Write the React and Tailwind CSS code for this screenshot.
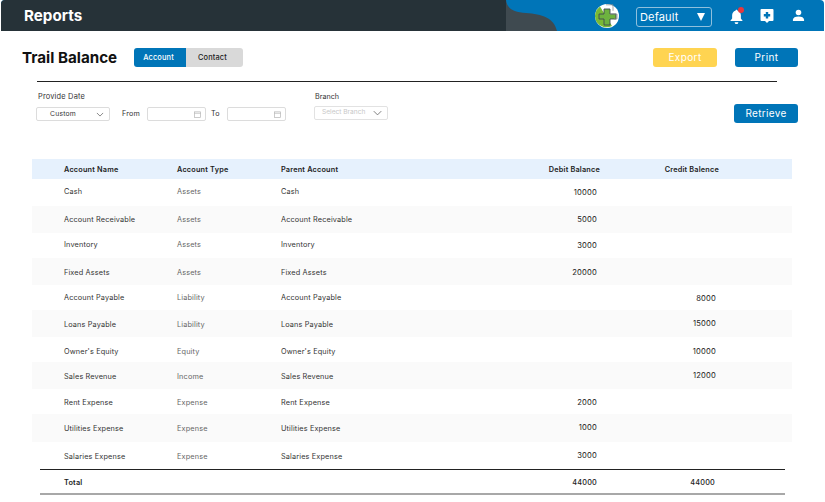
const FONT = "font-['Inter','Liberation_Sans',sans-serif]";

const rows = [
  { n: 'Cash', t: 'Assets', d: '10000', h: 'h-[27px] pb-[2px]', bg: '', low: true },
  { n: 'Account Receivable', t: 'Assets', d: '5000', h: 'h-[27px]', bg: 'bg-[#fafafa]' },
  { n: 'Inventory', t: 'Assets', d: '3000', h: 'h-[25px] pb-[2px]', bg: '', low: true },
  { n: 'Fixed Assets', t: 'Assets', d: '20000', h: 'h-[27px] pt-px', bg: 'bg-[#fafafa]', low: true },
  { n: 'Account Payable', t: 'Liability', c: '8000', h: 'h-[25px]', bg: '', low: true },
  { n: 'Loans Payable', t: 'Liability', c: '15000', h: 'h-[27px] pt-px', bg: 'bg-[#fafafa]' },
  { n: "Owner's Equity", t: 'Equity', c: '10000', h: 'h-[25px] pt-[3px]', bg: '', low: true },
  { n: 'Sales Revenue', t: 'Income', c: '12000', h: 'h-[27px] pt-px', bg: 'bg-[#fafafa]' },
  { n: 'Rent Expense', t: 'Expense', d: '2000', h: 'h-[25px] pt-px', bg: '', low: true },
  { n: 'Utilities Expense', t: 'Expense', d: '1000', h: 'h-[28px]', bg: 'bg-[#fafafa]' },
  { n: 'Salaries Expense', t: 'Expense', d: '3000', h: 'h-[27px] pt-px', bg: '' },
];

function Chevron({ className }) {
  return (
    <svg viewBox="0 0 12 8" className={className} fill="none" stroke="currentColor" strokeWidth="1.1">
      <path d="M1 1.500 6 6.500 11 1.500" />
    </svg>
  );
}

function CalendarIcon() {
  return (
    <svg viewBox="0 0 8 8" className="w-[7px] h-[7px] text-[#b5b5b5]" fill="none" stroke="currentColor" strokeWidth="0.8">
      <rect x="0.5" y="1" width="7" height="6.5" />
      <path d="M0.500 2.600H7.500" />
    </svg>
  );
}

function DateField() {
  return (
    <div className="w-[59px] h-[14px] border border-[#dcdcdc] rounded-[2px] flex items-center justify-end pr-[4px]">
      <CalendarIcon />
    </div>
  );
}

function Logo() {
  return (
    <svg viewBox="0 0 24 24" className="w-[24px] h-[24px]">
      <circle cx="12" cy="12" r="12" fill="#fff" />
      <path d="M1.500 18A12 12 0 0 1 5 2.500L17 22A12 12 0 0 1 1.500 18Z" fill="#79b935" />
      <path d="M9 5h6v5h6v5h-6v6H9v-6H4v-5h5Z" fill="#6db33f" stroke="#3f4a50" strokeWidth="0.9" />
      <path d="M11 0.800h7v6" fill="none" stroke="#8a8f92" strokeWidth="0.8" />
      <path d="M15 10h7v5h-3" fill="none" stroke="#8a8f92" strokeWidth="0.8" />
    </svg>
  );
}

function Row({ r }) {
  const num = `shrink-0 text-right text-[7.6px] tracking-[0.2px] text-[#222] ${r.low ? 'mt-[2px]' : ''}`;
  return (
    <div className={`${r.h} ${r.bg} flex text-[7.3px] tracking-[0.15px] text-[#333] items-center`}>
      <div className="w-[145px] pl-[32px] shrink-0 mt-[2px]">{r.n}</div>
      <div className="w-[104px] shrink-0 text-[#666] mt-[2px]">{r.t}</div>
      <div className="w-[190px] shrink-0 mt-[2px]">{r.n}</div>
      <div className={`w-[126px] ${num}`}>{r.d}</div>
      <div className={`w-[119px] ${num}`}>{r.c}</div>
    </div>
  );
}

export default function App() {
  return (
    <div className={`${FONT} antialiased w-[825px] h-[502px] bg-white overflow-hidden`}>
      <header className="ml-px mr-px h-[31px] rounded-t-[4px] bg-[#0075b8] flex overflow-hidden">
        <div className="w-[505px] bg-[#263238] flex items-center pl-[23px] pt-[2px] text-white font-bold text-[15.2px]">Reports</div>
        <svg viewBox="0 0 52 31" className="w-[52px] h-[31px] shrink-0">
          <path d="M0 0C1 9 8 12 20 13C36 14 48 18 51 31H0Z" fill="#3f4a50" />
        </svg>
        <div className="flex-1 flex items-center pl-[37px]">
          <Logo />
          <div className="ml-[17px] mt-[3px] w-[76px] h-[20px] border border-[#8fc0dd] rounded-[3px] flex items-center justify-between pl-[3px] pr-[6px] text-white text-[11px] tracking-[0.15px]">
            <span className="pt-px">Default</span>
            <span className="w-0 h-0 border-l-[4px] border-r-[4px] border-t-[8px] border-l-transparent border-r-transparent border-t-white" />
          </div>
          <div className="relative ml-[17px] w-[14px] h-[16px]">
            <svg viewBox="0 0 24 24" className="w-[15px] h-[17px]" fill="#fff">
              <path d="M12 1c1 0 1.600.7 1.700 1.700C17 3.500 19 6.500 19 10v5l3 4H2l3-4v-5c0-3.500 2-6.500 5.300-7.300C10.400 1.700 11 1 12 1ZM9 21h6a3 3 0 0 1-6 0Z" />
            </svg>
            <span className="absolute -top-[1px] right-[-1px] w-[6px] h-[6px] rounded-full bg-[#e8383d]" />
          </div>
          <svg viewBox="0 0 14 16" className="ml-[17px] w-[14px] h-[16px]">
            <path d="M1.500 1h11a1 1 0 0 1 1 1v10a1 1 0 0 1-1 1H9l-2 2-2-2H1.500a1 1 0 0 1-1-1V2a1 1 0 0 1 1-1Z" fill="#fff" />
            <path d="M5.800 4h2.400v2h2v2.400h-2v2H5.800v-2h-2V6h2Z" fill="#0075b8" />
          </svg>
          <svg viewBox="0 0 14 14" className="ml-[18px] w-[13px] h-[13px]" fill="#fff">
            <circle cx="7" cy="3.800" r="3" />
            <path d="M1 13v-1.500C1 9.300 3.500 8 7 8s6 1.300 6 3.500V13Z" />
          </svg>
        </div>
      </header>

      <div className="h-[50px] flex items-center pl-[22px] pr-[27px] pt-[2px]">
        <h1 className="text-[#111] font-bold text-[15.2px] w-[112px] pt-[2px]">Trail Balance</h1>
        <div className="flex h-[19px] rounded-[3px] overflow-hidden text-[7.4px] tracking-[0.15px]">
          <div className="w-[52px] pr-[3px] pt-px bg-[#0075b8] text-white flex items-center justify-center font-medium">Account</div>
          <div className="w-[57px] pr-[4px] pt-px bg-[#d9d9d9] text-[#222] flex items-center justify-center font-medium">Contact</div>
        </div>
        <div className="ml-auto w-[64px] h-[19px] rounded-[3px] bg-[#ffd451] text-white text-[10px] tracking-[0.4px] flex items-center justify-center">Export</div>
        <div className="ml-[18px] w-[63px] h-[19px] rounded-[3px] bg-[#0075b8] text-white text-[10px] tracking-[0.4px] flex items-center justify-center">Print</div>
      </div>

      <div className="ml-[37px] w-[740px] h-px bg-[#222]" />

      <div className="h-[77px] relative flex pl-[36px] pr-[27px] pt-[10px]">
        <div className="w-[278px]">
          <div className="pl-[2px] text-[7.4px] tracking-[0.2px] text-[#333] leading-[10px]">Provide Date</div>
          <div className="mt-[5px] flex items-center text-[7.2px] tracking-[0.2px] text-[#333]">
            <div className="w-[74px] h-[14px] border border-[#dcdcdc] rounded-[2px] flex items-center justify-between pl-[13px] pr-[5px]">
              <span className="text-[6.8px]">Custom</span>
              <Chevron className="w-[8px] h-[5px] text-[#555]" />
            </div>
            <span className="ml-[12px] w-[25px]">From</span>
            <DateField />
            <span className="ml-[5px] w-[16px]">To</span>
            <DateField />
          </div>
        </div>
        <div>
          <div className="pl-px text-[7.2px] text-[#333] leading-[10px]">Branch</div>
          <div className="mt-[4px] w-[74px] h-[14px] border border-[#e2e2e2] rounded-[2px] flex items-center justify-between pl-[7px] pr-[5px] text-[#c8c8c8] text-[6.6px]">
            <span>Select Branch</span>
            <Chevron className="w-[9px] h-[6px] text-[#666]" />
          </div>
        </div>
        <div className="ml-auto mt-[12px] w-[64px] h-[19px] rounded-[3px] bg-[#0075b8] text-white text-[10px] tracking-[0.3px] flex items-center justify-center">Retrieve</div>
      </div>

      <div className="ml-[32px] w-[760px]">
        <div className="h-[20px] pt-[2px] bg-[#e6f1fd] flex items-center text-[7.3px] tracking-[0.2px] font-semibold text-[#222]">
          <div className="w-[145px] pl-[32px] shrink-0">Account Name</div>
          <div className="w-[104px] shrink-0">Account Type</div>
          <div className="w-[190px] shrink-0">Parent Account</div>
          <div className="w-[129px] shrink-0 text-right">Debit Balance</div>
          <div className="w-[119px] shrink-0 text-right">Credit Balence</div>
        </div>
        {rows.map((r) => (
          <Row key={r.n} r={r} />
        ))}
        <div className="ml-[8px] w-[745px] h-[26px] pt-[3px] border-t border-t-[#222] border-b-2 border-b-[#a8a8a8] flex items-center text-[7.3px] tracking-[0.2px] text-[#222]">
          <div className="w-[256px] pl-[24px] shrink-0 font-semibold">Total</div>
          <div className="w-[301px] shrink-0 text-right font-medium">44000</div>
          <div className="w-[118px] shrink-0 text-right font-medium">44000</div>
        </div>
      </div>
    </div>
  );
}
